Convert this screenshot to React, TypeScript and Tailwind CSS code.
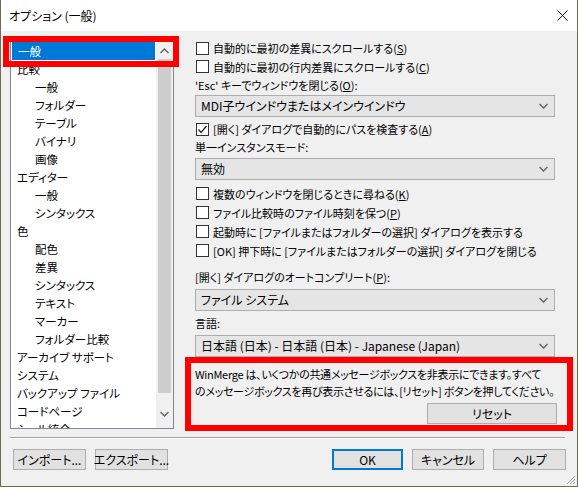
import { ReactNode } from 'react';

const font = "[font-family:'Noto_Sans_CJK_JP','Noto_Sans',sans-serif] [font-feature-settings:'palt']";

const treeItems: { label: string; level: number }[] = [
  { label: '一般', level: 0 },
  { label: '比較', level: 0 },
  { label: '一般', level: 1 },
  { label: 'フォルダー', level: 1 },
  { label: 'テーブル', level: 1 },
  { label: 'バイナリ', level: 1 },
  { label: '画像', level: 1 },
  { label: 'エディター', level: 0 },
  { label: '一般', level: 1 },
  { label: 'シンタックス', level: 1 },
  { label: '色', level: 0 },
  { label: '配色', level: 1 },
  { label: '差異', level: 1 },
  { label: 'シンタックス', level: 1 },
  { label: 'テキスト', level: 1 },
  { label: 'マーカー', level: 1 },
  { label: 'フォルダー比較', level: 1 },
  { label: 'アーカイブ サポート', level: 0 },
  { label: 'システム', level: 0 },
  { label: 'バックアップ ファイル', level: 0 },
  { label: 'コードページ', level: 0 },
  { label: 'シェル統合', level: 0 },
];

function Chevron({ up }: { up?: boolean }) {
  return (
    <svg width="9" height="6" viewBox="0 0 9 6" className="block">
      <polyline
        points={up ? '0.5,5 4.5,1 8.5,5' : '0.5,1 4.5,5 8.5,1'}
        fill="none"
        stroke="#606060"
        strokeWidth="1.3"
      />
    </svg>
  );
}

function Checkbox({ checked, children, className }: { checked?: boolean; children: ReactNode; className: string }) {
  return (
    <div className={`flex items-center pl-[1px] ${className}`}>
      <div className="flex h-[13px] w-[13px] shrink-0 items-center justify-center border border-[#333333] bg-white">
        {checked && (
          <svg width="11" height="11" viewBox="0 0 11 11">
            <polyline points="1.5,5.5 4,8.5 9.5,2" fill="none" stroke="#222" strokeWidth="1.2" />
          </svg>
        )}
      </div>
      <span className="ml-[4px] whitespace-nowrap">{children}</span>
    </div>
  );
}

function Select({ value, className }: { value: string; className: string }) {
  return (
    <div className={`flex h-[22px] w-[360px] items-center justify-between border border-[#adadad] bg-[#e5e5e5] pl-[5px] pr-[6px] ${className}`}>
      <span className="whitespace-nowrap text-[12px]">{value}</span>
      <Chevron />
    </div>
  );
}

function Button({ children, className }: { children: ReactNode; className: string }) {
  return (
    <div className={`flex h-[21px] items-center justify-center whitespace-nowrap border border-[#adadad] bg-[#e1e1e1] ${className}`}>
      {children}
    </div>
  );
}

export default function App() {
  return (
    <div className={`relative flex h-[487px] w-[578px] flex-col border-b border-l border-r border-[#6f6a50] bg-[#f0f0f0] text-[11.5px] leading-[18px] text-black ${font}`}>
      {/* title bar */}
      <div className="flex h-[31px] items-center justify-between bg-white pl-[8px] pr-[8px]">
        <span className="text-[12px]">オプション (一般)</span>
        <svg width="11" height="11" viewBox="0 0 11 11" className="mr-[1px]">
          <path d="M0.5,0.5 L10.5,10.5 M10.5,0.5 L0.5,10.5" stroke="#111" strokeWidth="1" />
        </svg>
      </div>

      {/* body */}
      <div className="flex h-[403px]">
        {/* tree */}
        <div className="ml-[9px] mt-[10px] flex h-[388px] w-[164px] border border-[#828790] bg-white">
          <div className="flex-1 overflow-hidden">
            {treeItems.map((item, i) => (
              <div
                key={i}
                className={`h-[18px] whitespace-nowrap ${item.level ? 'pl-[24px]' : 'pl-[6px]'} ${i === 0 ? 'mx-[1px] bg-[#0078d7] pl-[5px] text-white' : ''}`}
              >
                {item.label}
              </div>
            ))}
          </div>
          <div className="flex w-[17px] flex-col items-center bg-[#f0f0f0]">
            <div className="flex h-[17px] w-full items-center justify-center">
              <Chevron up />
            </div>
            <div className="h-[334px] w-[13px] bg-[#cdcdcd]" />
            <div className="flex flex-1 items-center justify-center pt-[6px]">
              <Chevron />
            </div>
          </div>
        </div>

        {/* settings */}
        <div className="ml-[21px] flex w-[362px] flex-col pt-[8px] text-[11px]">
          <Checkbox className="h-[18px]">
            自動的に最初の差異にスクロールする(<u>S</u>)
          </Checkbox>
          <Checkbox className="h-[19px]">
            自動的に最初の行内差異にスクロールする(<u>C</u>)
          </Checkbox>
          <div className="h-[19px] leading-[19px]">
            'Esc' キーでウィンドウを閉じる(<u>O</u>):
          </div>
          <Select value="MDI子ウインドウまたはメインウインドウ" className="" />
          <Checkbox checked className="mt-[3px] h-[18px]">
            [開く] ダイアログで自動的にパスを検査する(<u>A</u>)
          </Checkbox>
          <div className="h-[18px]">単一インスタンスモード:</div>
          <Select value="無効" className="mt-[2px]" />
          <Checkbox className="mt-[4px] h-[19px]">
            複数のウィンドウを閉じるときに尋ねる(<u>K</u>)
          </Checkbox>
          <Checkbox className="h-[19px]">
            ファイル比較時のファイル時刻を保つ(<u>P</u>)
          </Checkbox>
          <Checkbox className="h-[19px]">
            起動時に [ファイルまたはフォルダーの選択] ダイアログを表示する
          </Checkbox>
          <Checkbox className="h-[19px]">
            [OK] 押下時に [ファイルまたはフォルダーの選択] ダイアログを閉じる
          </Checkbox>
          <div className="mt-[8px] h-[18px]">
            [開く] ダイアログのオートコンプリート(<u>P</u>):
          </div>
          <Select value="ファイル システム" className="mt-[3px]" />
          <div className="mt-[3px] h-[18px]">言語:</div>
          <Select value="日本語 (日本) - 日本語 (日本) - Japanese (Japan)" className="mt-[3px]" />
          <div className="mt-[9px] whitespace-nowrap text-[11px] leading-[17px] tracking-[-0.3px]">
            WinMerge は、いくつかの共通メッセージボックスを非表示にできます。すべて
            <br />
            のメッセージボックスを再び表示させるには、[リセット] ボタンを押してください。
          </div>
          <div className="mt-[3px] flex justify-end">
            <Button className="w-[130px] text-[12px]">リセット</Button>
          </div>
        </div>
      </div>

      {/* separator */}
      <div className="ml-[9px] mr-[12px] mt-[3px] border-t border-b border-t-[#a0a0a0] border-b-white" />

      {/* bottom buttons */}
      <div className="mt-[10px] flex h-[21px] pl-[12px] pr-[11px] text-[12px]">
        <Button className="w-[73px]">インポート...</Button>
        <Button className="ml-[9px] w-[73px]">エクスポート...</Button>
        <div className="flex-1" />
        <div className="flex h-[21px] w-[71px] items-center justify-center border-2 border-[#0078d7] bg-[#e1e1e1]">OK</div>
        <Button className="ml-[9px] w-[72px]">キャンセル</Button>
        <Button className="ml-[9px] w-[73px]">ヘルプ</Button>
      </div>

      {/* resize grip */}
      <svg width="10" height="10" viewBox="0 0 10 10" className="absolute bottom-[1px] right-[1px]">
        <path d="M9,1 L1,9 M9,4 L4,9 M9,7 L7,9" stroke="#a0a0a0" strokeWidth="1" />
      </svg>

      {/* red annotation frames */}
      <div className="pointer-events-none absolute left-[2px] top-[36px] h-[31px] w-[176px] border-[6px] border-[#ff0000]" />
      <div className="pointer-events-none absolute left-[184px] top-[357px] h-[74px] w-[388px] border-[6px] border-[#ff0000]" />
    </div>
  );
}
